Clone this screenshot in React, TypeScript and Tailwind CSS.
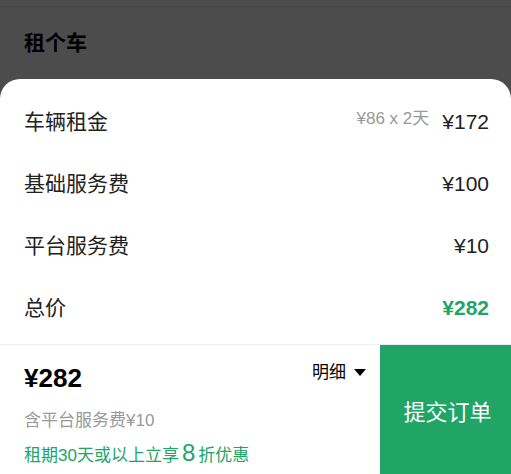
import React from "react";

const font = { fontFamily: '"Liberation Sans", "Noto Sans CJK SC", sans-serif' };

export default function App() {
  const rows = [
    { label: "车辆租金", value: "¥172", sub: "¥86 x 2天" },
    { label: "基础服务费", value: "¥100" },
    { label: "平台服务费", value: "¥10" },
  ];
  return (
    <div className="w-[511px] h-[474px] bg-[#4c4c4c] flex flex-col overflow-hidden" style={font}>
      <div className="h-[79px] flex flex-col">
        <div className="h-[6px]" />
        <div className="h-px bg-[#454545]" />
        <div className="flex-1 flex items-center px-6 pb-[1px]">
          <span className="text-[21px] font-bold text-black">租个车</span>
        </div>
      </div>
      <div className="flex-1 bg-white rounded-t-[20px] flex flex-col">
        <div className="pt-[12px] px-6 pr-[22px] flex flex-col">
          {rows.map((r) => (
            <div key={r.label} className="h-[62px] flex items-center justify-between">
              <span className="text-[21px] text-[#222]">{r.label}</span>
              <div className="flex items-center gap-[13px]">
                {r.sub && <span className="text-[17px] text-[#999] -translate-y-[3px]">{r.sub}</span>}
                <span className="text-[21px] text-[#222]">{r.value}</span>
              </div>
            </div>
          ))}
          <div className="h-[62px] flex items-center justify-between">
            <span className="text-[21px] text-[#222]">总价</span>
            <span className="text-[21px] font-bold text-[#21a566]">¥282</span>
          </div>
        </div>
        <div className="mt-[5px] border-t border-[#eeeeee] flex-1 flex">
          <div className="flex-1 pl-6 pr-[14px] pt-[18px] flex flex-col">
            <div className="flex items-start justify-between">
              <span className="text-[26px] font-bold text-black leading-[30px]">¥282</span>
              <div className="flex items-center gap-[8px] -mt-[3px]">
                <span className="text-[17px] text-black">明细</span>
                <svg width="12" height="7" viewBox="0 0 12 7">
                  <path d="M0 0 L12 0 L6 7 Z" fill="#000" />
                </svg>
              </div>
            </div>
            <div className="mt-[17px] text-[17px] text-[#999] leading-[22px]">含平台服务费¥10</div>
            <div className="mt-[8px] text-[17px] text-[#21a566] leading-[26px] flex items-baseline">
              <span>租期30天或以上立享</span>
              <span className="text-[24px] mx-[3px]">8</span>
              <span>折优惠</span>
            </div>
          </div>
          <div className="w-[131px] bg-[#21a566] flex items-center justify-center pt-[5px] pl-[4px]">
            <span className="text-[22px] text-white">提交订单</span>
          </div>
        </div>
      </div>
    </div>
  );
}
